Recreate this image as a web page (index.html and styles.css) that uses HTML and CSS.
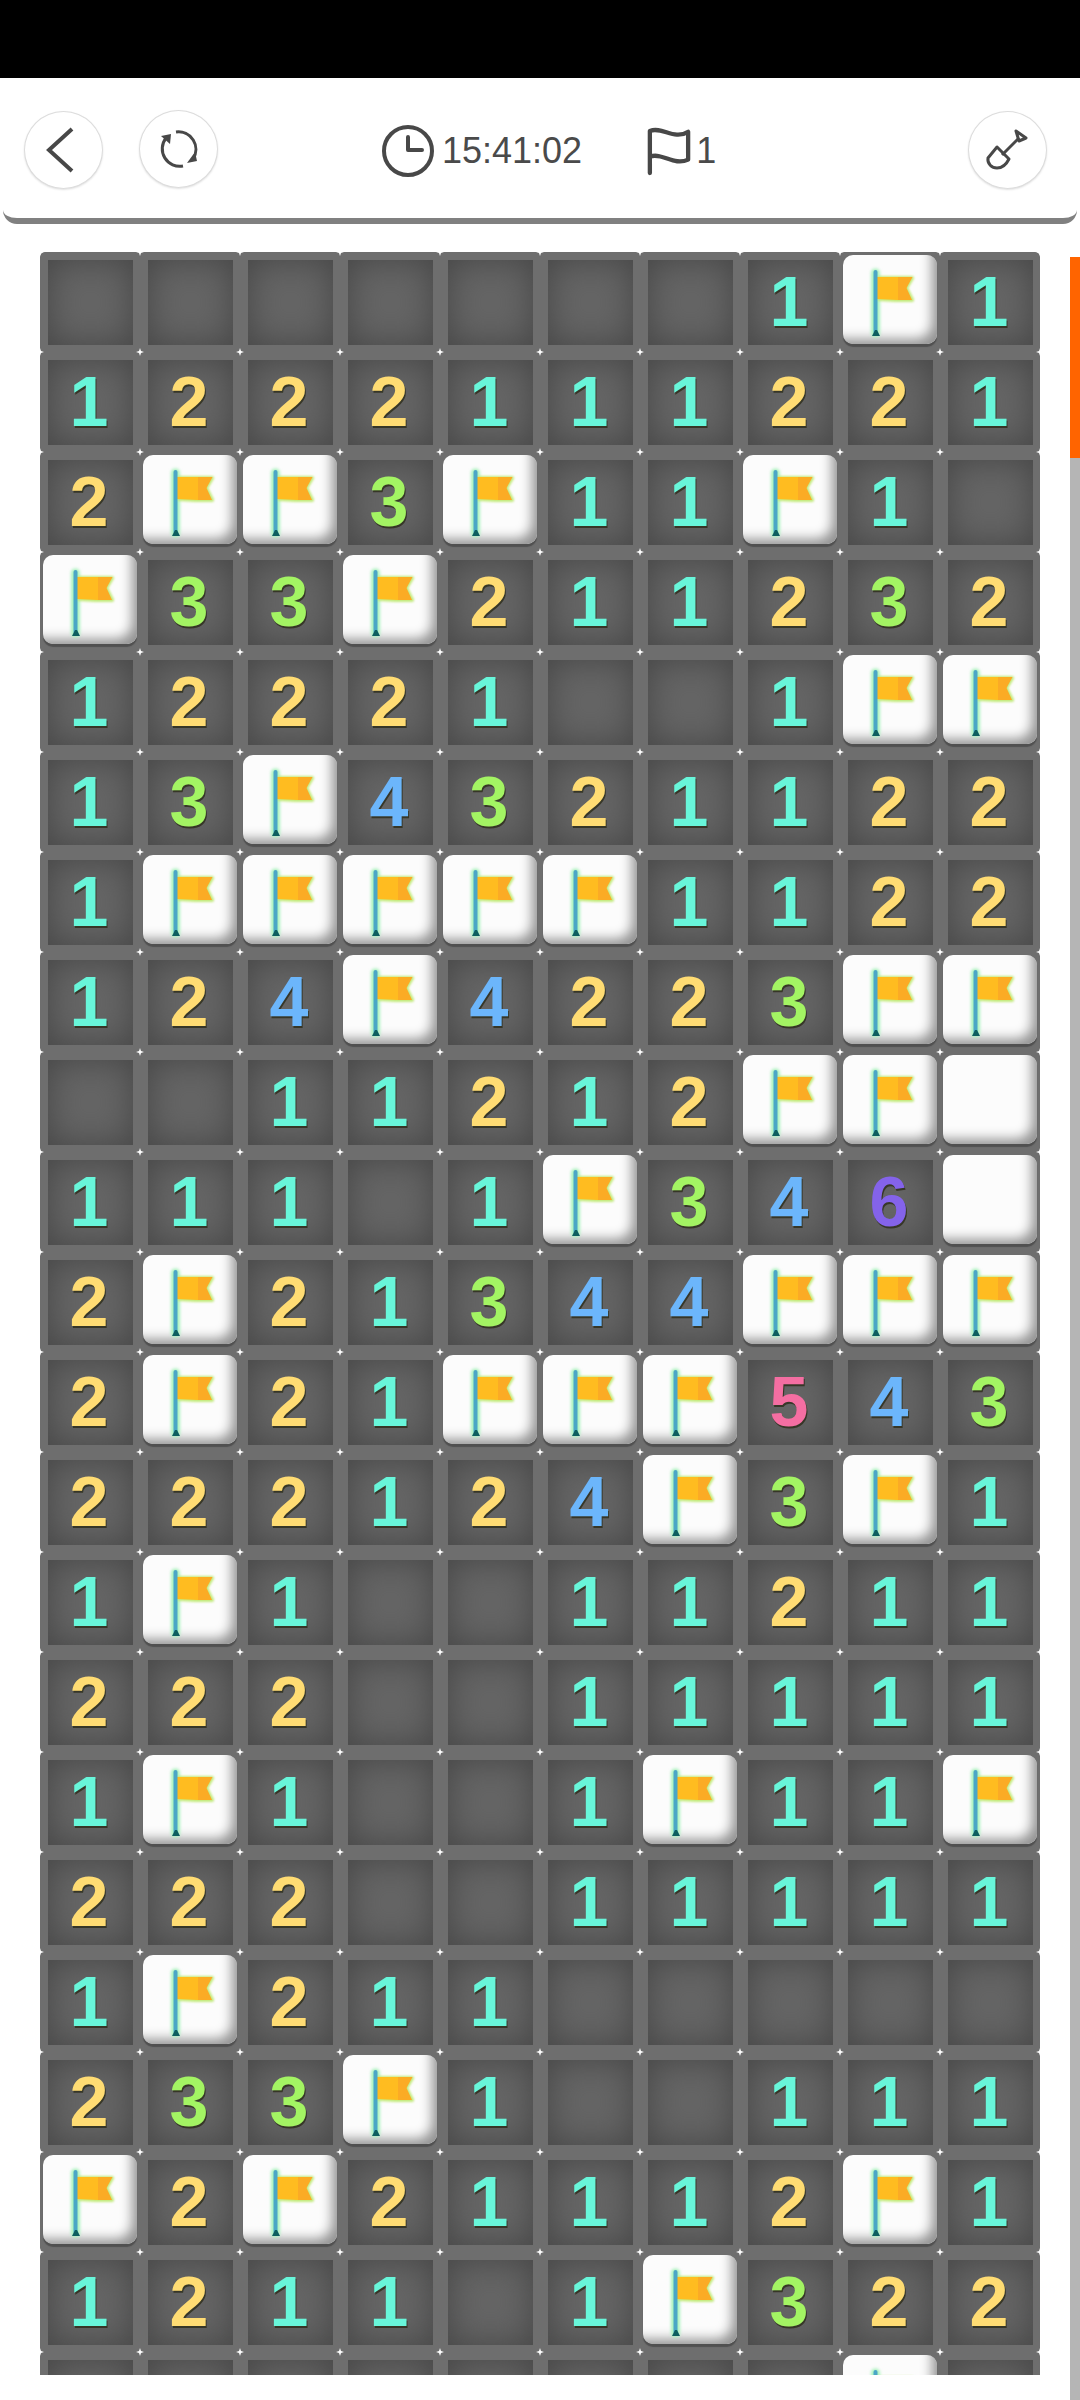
FILE: index.html
```html
<!DOCTYPE html>
<html lang="en">
<head>
<meta charset="utf-8">
<title>Minesweeper</title>
<link rel="stylesheet" href="styles.css">
</head>
<body>
<svg class="defs" width="0" height="0" aria-hidden="true">
  <symbol id="flag" viewBox="0 0 94 89">
    <path class="flag-glow" d="M32.500 18V78"/>
    <path class="flag-glow-body" d="M36 23H69L63 33L69 45H53L36 44Z"/>
    <path class="flag-main" d="M34 22H55V45L34 44Z"/>
    <path class="flag-tail" d="M55 22H69.500L63.500 33L69 45H55Z"/>
    <rect class="flag-pole" x="30.500" y="15" width="4" height="64" rx="2"/>
    <path class="flag-base" d="M29 81L32 75H34L37 81Z"/>
  </symbol>
</svg>
<div class="page">
  <div class="status-bar"></div>
  <header class="toolbar">
    <button class="round-btn btn-back" aria-label="Back">
      <svg class="btn-icon" width="79" height="78" viewBox="0 0 79 78"><path class="ic-back" d="M48 18L25 39L48 60"/></svg>
    </button>
    <button class="round-btn btn-refresh" aria-label="Restart">
      <svg class="btn-icon" width="79" height="78" viewBox="4 5 79 78">
        <path class="ic-thin" d="M41 27A17.500 17.500 0 0 1 58 54"/>
        <path class="ic-thin" d="M48 61A17.500 17.500 0 0 1 31 33"/>
        <path class="ic-fill" d="M26 31L36 29L35 39Z"/>
        <path class="ic-fill" d="M52 58L62 56L60 47Z"/>
      </svg>
    </button>
    <div class="stat stat-time">
      <svg width="52" height="52" viewBox="0 0 52 52"><circle class="ic" cx="26" cy="26" r="24"/><path class="ic" d="M26 12V25H40"/></svg>
      <span>15:41:02</span>
    </div>
    <div class="stat stat-flags">
      <svg width="44" height="50" viewBox="0 0 46 50"><path class="ic-flag" d="M3 48V4C16 -1 28 14 43 5V34C28 41 16 26 3 31"/></svg>
      <span>1</span>
    </div>
    <button class="round-btn btn-shovel" aria-label="Dig">
      <svg class="btn-icon" width="79" height="78" viewBox="4 6 79 78">
        <path class="ic-thin" d="M33 42L45 54C42 60 38 63 33 63C28 63 23 59 24 53Z"/>
        <path class="ic-thin" d="M38 50L55 33"/>
        <path class="ic-thin" d="M52 26L62 33L55 36Z"/>
      </svg>
    </button>
  </header>
  <main class="board-wrap">
    <section class="board">
      <div class="cell"><span class="pit"></span></div><div class="cell"><span class="pit"></span></div><div class="cell"><span class="pit"></span></div><div class="cell"><span class="pit"></span></div><div class="cell"><span class="pit"></span></div><div class="cell"><span class="pit"></span></div><div class="cell"><span class="pit"></span></div><div class="cell"><span class="pit n1">1</span></div><div class="cell"><span class="tile"><svg class="flag"><use href="#flag"/></svg></span></div><div class="cell"><span class="pit n1">1</span></div>
      <div class="cell"><span class="pit n1">1</span></div><div class="cell"><span class="pit n2">2</span></div><div class="cell"><span class="pit n2">2</span></div><div class="cell"><span class="pit n2">2</span></div><div class="cell"><span class="pit n1">1</span></div><div class="cell"><span class="pit n1">1</span></div><div class="cell"><span class="pit n1">1</span></div><div class="cell"><span class="pit n2">2</span></div><div class="cell"><span class="pit n2">2</span></div><div class="cell"><span class="pit n1">1</span></div>
      <div class="cell"><span class="pit n2">2</span></div><div class="cell"><span class="tile"><svg class="flag"><use href="#flag"/></svg></span></div><div class="cell"><span class="tile"><svg class="flag"><use href="#flag"/></svg></span></div><div class="cell"><span class="pit n3">3</span></div><div class="cell"><span class="tile"><svg class="flag"><use href="#flag"/></svg></span></div><div class="cell"><span class="pit n1">1</span></div><div class="cell"><span class="pit n1">1</span></div><div class="cell"><span class="tile"><svg class="flag"><use href="#flag"/></svg></span></div><div class="cell"><span class="pit n1">1</span></div><div class="cell"><span class="pit"></span></div>
      <div class="cell"><span class="tile"><svg class="flag"><use href="#flag"/></svg></span></div><div class="cell"><span class="pit n3">3</span></div><div class="cell"><span class="pit n3">3</span></div><div class="cell"><span class="tile"><svg class="flag"><use href="#flag"/></svg></span></div><div class="cell"><span class="pit n2">2</span></div><div class="cell"><span class="pit n1">1</span></div><div class="cell"><span class="pit n1">1</span></div><div class="cell"><span class="pit n2">2</span></div><div class="cell"><span class="pit n3">3</span></div><div class="cell"><span class="pit n2">2</span></div>
      <div class="cell"><span class="pit n1">1</span></div><div class="cell"><span class="pit n2">2</span></div><div class="cell"><span class="pit n2">2</span></div><div class="cell"><span class="pit n2">2</span></div><div class="cell"><span class="pit n1">1</span></div><div class="cell"><span class="pit"></span></div><div class="cell"><span class="pit"></span></div><div class="cell"><span class="pit n1">1</span></div><div class="cell"><span class="tile"><svg class="flag"><use href="#flag"/></svg></span></div><div class="cell"><span class="tile"><svg class="flag"><use href="#flag"/></svg></span></div>
      <div class="cell"><span class="pit n1">1</span></div><div class="cell"><span class="pit n3">3</span></div><div class="cell"><span class="tile"><svg class="flag"><use href="#flag"/></svg></span></div><div class="cell"><span class="pit n4">4</span></div><div class="cell"><span class="pit n3">3</span></div><div class="cell"><span class="pit n2">2</span></div><div class="cell"><span class="pit n1">1</span></div><div class="cell"><span class="pit n1">1</span></div><div class="cell"><span class="pit n2">2</span></div><div class="cell"><span class="pit n2">2</span></div>
      <div class="cell"><span class="pit n1">1</span></div><div class="cell"><span class="tile"><svg class="flag"><use href="#flag"/></svg></span></div><div class="cell"><span class="tile"><svg class="flag"><use href="#flag"/></svg></span></div><div class="cell"><span class="tile"><svg class="flag"><use href="#flag"/></svg></span></div><div class="cell"><span class="tile"><svg class="flag"><use href="#flag"/></svg></span></div><div class="cell"><span class="tile"><svg class="flag"><use href="#flag"/></svg></span></div><div class="cell"><span class="pit n1">1</span></div><div class="cell"><span class="pit n1">1</span></div><div class="cell"><span class="pit n2">2</span></div><div class="cell"><span class="pit n2">2</span></div>
      <div class="cell"><span class="pit n1">1</span></div><div class="cell"><span class="pit n2">2</span></div><div class="cell"><span class="pit n4">4</span></div><div class="cell"><span class="tile"><svg class="flag"><use href="#flag"/></svg></span></div><div class="cell"><span class="pit n4">4</span></div><div class="cell"><span class="pit n2">2</span></div><div class="cell"><span class="pit n2">2</span></div><div class="cell"><span class="pit n3">3</span></div><div class="cell"><span class="tile"><svg class="flag"><use href="#flag"/></svg></span></div><div class="cell"><span class="tile"><svg class="flag"><use href="#flag"/></svg></span></div>
      <div class="cell"><span class="pit"></span></div><div class="cell"><span class="pit"></span></div><div class="cell"><span class="pit n1">1</span></div><div class="cell"><span class="pit n1">1</span></div><div class="cell"><span class="pit n2">2</span></div><div class="cell"><span class="pit n1">1</span></div><div class="cell"><span class="pit n2">2</span></div><div class="cell"><span class="tile"><svg class="flag"><use href="#flag"/></svg></span></div><div class="cell"><span class="tile"><svg class="flag"><use href="#flag"/></svg></span></div><div class="cell"><span class="tile"></span></div>
      <div class="cell"><span class="pit n1">1</span></div><div class="cell"><span class="pit n1">1</span></div><div class="cell"><span class="pit n1">1</span></div><div class="cell"><span class="pit"></span></div><div class="cell"><span class="pit n1">1</span></div><div class="cell"><span class="tile"><svg class="flag"><use href="#flag"/></svg></span></div><div class="cell"><span class="pit n3">3</span></div><div class="cell"><span class="pit n4">4</span></div><div class="cell"><span class="pit n6">6</span></div><div class="cell"><span class="tile"></span></div>
      <div class="cell"><span class="pit n2">2</span></div><div class="cell"><span class="tile"><svg class="flag"><use href="#flag"/></svg></span></div><div class="cell"><span class="pit n2">2</span></div><div class="cell"><span class="pit n1">1</span></div><div class="cell"><span class="pit n3">3</span></div><div class="cell"><span class="pit n4">4</span></div><div class="cell"><span class="pit n4">4</span></div><div class="cell"><span class="tile"><svg class="flag"><use href="#flag"/></svg></span></div><div class="cell"><span class="tile"><svg class="flag"><use href="#flag"/></svg></span></div><div class="cell"><span class="tile"><svg class="flag"><use href="#flag"/></svg></span></div>
      <div class="cell"><span class="pit n2">2</span></div><div class="cell"><span class="tile"><svg class="flag"><use href="#flag"/></svg></span></div><div class="cell"><span class="pit n2">2</span></div><div class="cell"><span class="pit n1">1</span></div><div class="cell"><span class="tile"><svg class="flag"><use href="#flag"/></svg></span></div><div class="cell"><span class="tile"><svg class="flag"><use href="#flag"/></svg></span></div><div class="cell"><span class="tile"><svg class="flag"><use href="#flag"/></svg></span></div><div class="cell"><span class="pit n5">5</span></div><div class="cell"><span class="pit n4">4</span></div><div class="cell"><span class="pit n3">3</span></div>
      <div class="cell"><span class="pit n2">2</span></div><div class="cell"><span class="pit n2">2</span></div><div class="cell"><span class="pit n2">2</span></div><div class="cell"><span class="pit n1">1</span></div><div class="cell"><span class="pit n2">2</span></div><div class="cell"><span class="pit n4">4</span></div><div class="cell"><span class="tile"><svg class="flag"><use href="#flag"/></svg></span></div><div class="cell"><span class="pit n3">3</span></div><div class="cell"><span class="tile"><svg class="flag"><use href="#flag"/></svg></span></div><div class="cell"><span class="pit n1">1</span></div>
      <div class="cell"><span class="pit n1">1</span></div><div class="cell"><span class="tile"><svg class="flag"><use href="#flag"/></svg></span></div><div class="cell"><span class="pit n1">1</span></div><div class="cell"><span class="pit"></span></div><div class="cell"><span class="pit"></span></div><div class="cell"><span class="pit n1">1</span></div><div class="cell"><span class="pit n1">1</span></div><div class="cell"><span class="pit n2">2</span></div><div class="cell"><span class="pit n1">1</span></div><div class="cell"><span class="pit n1">1</span></div>
      <div class="cell"><span class="pit n2">2</span></div><div class="cell"><span class="pit n2">2</span></div><div class="cell"><span class="pit n2">2</span></div><div class="cell"><span class="pit"></span></div><div class="cell"><span class="pit"></span></div><div class="cell"><span class="pit n1">1</span></div><div class="cell"><span class="pit n1">1</span></div><div class="cell"><span class="pit n1">1</span></div><div class="cell"><span class="pit n1">1</span></div><div class="cell"><span class="pit n1">1</span></div>
      <div class="cell"><span class="pit n1">1</span></div><div class="cell"><span class="tile"><svg class="flag"><use href="#flag"/></svg></span></div><div class="cell"><span class="pit n1">1</span></div><div class="cell"><span class="pit"></span></div><div class="cell"><span class="pit"></span></div><div class="cell"><span class="pit n1">1</span></div><div class="cell"><span class="tile"><svg class="flag"><use href="#flag"/></svg></span></div><div class="cell"><span class="pit n1">1</span></div><div class="cell"><span class="pit n1">1</span></div><div class="cell"><span class="tile"><svg class="flag"><use href="#flag"/></svg></span></div>
      <div class="cell"><span class="pit n2">2</span></div><div class="cell"><span class="pit n2">2</span></div><div class="cell"><span class="pit n2">2</span></div><div class="cell"><span class="pit"></span></div><div class="cell"><span class="pit"></span></div><div class="cell"><span class="pit n1">1</span></div><div class="cell"><span class="pit n1">1</span></div><div class="cell"><span class="pit n1">1</span></div><div class="cell"><span class="pit n1">1</span></div><div class="cell"><span class="pit n1">1</span></div>
      <div class="cell"><span class="pit n1">1</span></div><div class="cell"><span class="tile"><svg class="flag"><use href="#flag"/></svg></span></div><div class="cell"><span class="pit n2">2</span></div><div class="cell"><span class="pit n1">1</span></div><div class="cell"><span class="pit n1">1</span></div><div class="cell"><span class="pit"></span></div><div class="cell"><span class="pit"></span></div><div class="cell"><span class="pit"></span></div><div class="cell"><span class="pit"></span></div><div class="cell"><span class="pit"></span></div>
      <div class="cell"><span class="pit n2">2</span></div><div class="cell"><span class="pit n3">3</span></div><div class="cell"><span class="pit n3">3</span></div><div class="cell"><span class="tile"><svg class="flag"><use href="#flag"/></svg></span></div><div class="cell"><span class="pit n1">1</span></div><div class="cell"><span class="pit"></span></div><div class="cell"><span class="pit"></span></div><div class="cell"><span class="pit n1">1</span></div><div class="cell"><span class="pit n1">1</span></div><div class="cell"><span class="pit n1">1</span></div>
      <div class="cell"><span class="tile"><svg class="flag"><use href="#flag"/></svg></span></div><div class="cell"><span class="pit n2">2</span></div><div class="cell"><span class="tile"><svg class="flag"><use href="#flag"/></svg></span></div><div class="cell"><span class="pit n2">2</span></div><div class="cell"><span class="pit n1">1</span></div><div class="cell"><span class="pit n1">1</span></div><div class="cell"><span class="pit n1">1</span></div><div class="cell"><span class="pit n2">2</span></div><div class="cell"><span class="tile"><svg class="flag"><use href="#flag"/></svg></span></div><div class="cell"><span class="pit n1">1</span></div>
      <div class="cell"><span class="pit n1">1</span></div><div class="cell"><span class="pit n2">2</span></div><div class="cell"><span class="pit n1">1</span></div><div class="cell"><span class="pit n1">1</span></div><div class="cell"><span class="pit"></span></div><div class="cell"><span class="pit n1">1</span></div><div class="cell"><span class="tile"><svg class="flag"><use href="#flag"/></svg></span></div><div class="cell"><span class="pit n3">3</span></div><div class="cell"><span class="pit n2">2</span></div><div class="cell"><span class="pit n2">2</span></div>
      <div class="cell"><span class="pit"></span></div><div class="cell"><span class="pit"></span></div><div class="cell"><span class="pit"></span></div><div class="cell"><span class="pit"></span></div><div class="cell"><span class="pit"></span></div><div class="cell"><span class="pit"></span></div><div class="cell"><span class="pit"></span></div><div class="cell"><span class="pit"></span></div><div class="cell"><span class="tile"><svg class="flag"><use href="#flag"/></svg></span></div><div class="cell"><span class="pit"></span></div>
    </section>
    <aside class="scrollbar"><div class="scroll-thumb"></div></aside>
  </main>
</div>
</body>
</html>
```
FILE: styles.css
```css
* { box-sizing: border-box; }
html, body { margin: 0; padding: 0; background: #fff; }
body { width: 1080px; height: 2400px; overflow: hidden; font-family: "Liberation Sans", Arial, sans-serif; }
.defs { position: absolute; }
.page { display: flex; flex-direction: column; height: 2400px; }
.status-bar { height: 78px; background: #000; flex: none; }

.toolbar {
  flex: none; height: 146px; margin: 0 3px; padding: 33px 30px 0 21px;
  display: flex; align-items: flex-start;
  background: #fff; border-bottom: 6px solid #808080;
  border-radius: 0 0 14px 14px;
}
.round-btn {
  width: 79px; height: 78px; flex: none; padding: 0;
  display: flex; align-items: center; justify-content: center;
  background: #fff; border: 1px solid #dcdcdc; border-radius: 50%;
  box-shadow: 0 1px 2px rgba(0,0,0,.12);
}
.btn-icon { flex: none; }
.btn-refresh { margin-left: 36px; margin-top: -1px; }
.btn-shovel { margin-left: auto; }
.stat { display: flex; align-items: center; color: #4a4a4a; font-size: 36px; height: 52px; margin-top: 14px; }
.stat-time { margin-left: 164px; gap: 8px; }
.stat-flags { margin-left: 65px; gap: 5px; }
.ic { fill: none; stroke: #484848; stroke-width: 4; stroke-linecap: round; stroke-linejoin: round; }
.ic-back { fill: none; stroke: #484848; stroke-width: 4; stroke-linejoin: miter; }
.ic-flag { fill: none; stroke: #484848; stroke-width: 4.500; stroke-linecap: round; stroke-linejoin: round; }
.ic-thin { fill: none; stroke: #484848; stroke-width: 3; stroke-linejoin: round; }
.ic-fill { fill: #484848; }

.board-wrap { flex: none; display: flex; align-items: flex-start; gap: 30px; padding: 28px 0 0 40px; }
.board {
  width: 1000px; height: 2123px; flex: none; overflow: hidden;
  display: grid; grid-template-columns: repeat(10, 100px); grid-auto-rows: 100px;
  background-color: #6e6e6e;
  background-image: url("data:image/svg+xml,%3Csvg xmlns='http://www.w3.org/2000/svg' width='100' height='100'%3E%3Cg fill='%23fff'%3E%3Cpath d='M0 -4L1 -1L4 0L1 1L0 4L-1 1L-4 0L-1 -1Z'/%3E%3Cpath d='M100 -4L101 -1L104 0L101 1L100 4L99 1L96 0L99 -1Z'/%3E%3Cpath d='M0 96L1 99L4 100L1 101L0 104L-1 101L-4 100L-1 99Z'/%3E%3Cpath d='M100 96L101 99L104 100L101 101L100 104L99 101L96 100L99 99Z'/%3E%3C/g%3E%3C/svg%3E");
  background-size: 100px 100px;
  border-radius: 5px 5px 0 0;
}
.cell { display: flex; width: 100px; height: 100px; }
.pit {
  margin: 8px 7px 7px 8px; width: 85px; height: 85px; padding-right: 3px;
  display: flex; align-items: center; justify-content: center;
  background: #656565; box-shadow: inset 0 0 34px #454545;
  font-size: 70px; font-weight: 700; line-height: 85px;
  text-shadow: 1px 2px 0 rgba(40,40,20,.75);
}
.n1 { color: #68f6da; }
.n2 { color: #ffdc73; }
.n3 { color: #a3f463; }
.n4 { color: #6cb6fb; }
.n5 { color: #f46ea2; }
.n6 { color: #8463ea; }
.tile {
  margin: 3px; width: 94px; height: 89px; display: block;
  background: #fcfcfc; border-radius: 10px;
  box-shadow: 0 3px 1px #505050, inset -11px -11px 12px -6px #949494;
}
.flag { display: block; width: 94px; height: 89px; }
.flag-glow { fill: none; stroke: #a8f2bc; stroke-width: 9; stroke-linecap: round; filter: blur(1.5px); }
.flag-glow-body { fill: #c2ea7a; stroke: #c2ea7a; stroke-width: 4; stroke-linejoin: round; filter: blur(1px); }
.flag-main { fill: #ffbc20; }
.flag-tail { fill: #fbab25; }
.flag-pole { fill: #4aa6c6; }
.flag-base { fill: #0e5f5f; }

.scrollbar { width: 10px; height: 2143px; margin-top: 5px; flex: none; background: #b5b5b5; }
.scroll-thumb { height: 201px; background: #ff6400; }
```
